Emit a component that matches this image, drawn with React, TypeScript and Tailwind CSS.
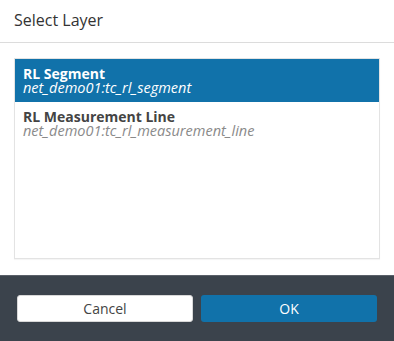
import React from "react"

interface LayerItem {
  title: string
  name: string
}

const layers: LayerItem[] = [
  { title: "RL Segment", name: "net_demo01:tc_rl_segment" },
  { title: "RL Measurement Line", name: "net_demo01:tc_rl_measurement_line" },
]

export default function App() {
  const [selected, setSelected] = React.useState(0)

  return (
    <div className="w-[394px] h-[341px] flex flex-col bg-white font-['Open_Sans',sans-serif] text-[#333]">
      {/* Cabecera */}
      <div className="h-[43px] shrink-0 border-b border-[#dcdcdc] pl-[14px] pt-[9px]">
        <h1 className="text-[16px] leading-[22px] text-[#333]">Select Layer</h1>
      </div>

      {/* Lista de capas */}
      <div className="flex-1 px-[14px] pt-[15px] pb-[16px]">
        <div className="h-[201px] border border-[#e3e3e3] shadow-[0_1px_1px_rgba(0,0,0,0.04)]">
          {layers.map((layer, index) => {
            const active = index === selected
            return (
              <div
                key={index}
                onClick={() => setSelected(index)}
                className={`h-[43px] pl-[8px] pt-[7px] cursor-pointer ${
                  active ? "bg-[#1172aa] text-white" : "bg-white"
                }`}
              >
                <p className={`text-[14px] leading-[15px] font-bold ${active ? "text-white" : "text-[#444]"}`}>
                  {layer.title}
                </p>
                <p className={`text-[14.5px] leading-[14px] italic ${active ? "text-white" : "text-[#8a8a8a]"}`}>
                  {layer.name}
                </p>
              </div>
            )
          })}
        </div>
      </div>

      {/* Pie con botones */}
      <div className="h-[66px] shrink-0 bg-[#3b434c] border-t border-[#5a6069] flex gap-[8px] px-[17px] pt-[19px]">
        <button className="w-[176px] h-[27px] rounded-[3px] bg-white border border-[#d8d8d8] text-[14px] text-[#444]">
          Cancel
        </button>
        <button className="w-[176px] h-[27px] rounded-[3px] bg-[#1172aa] text-[14px] text-white">
          OK
        </button>
      </div>
    </div>
  )
}
